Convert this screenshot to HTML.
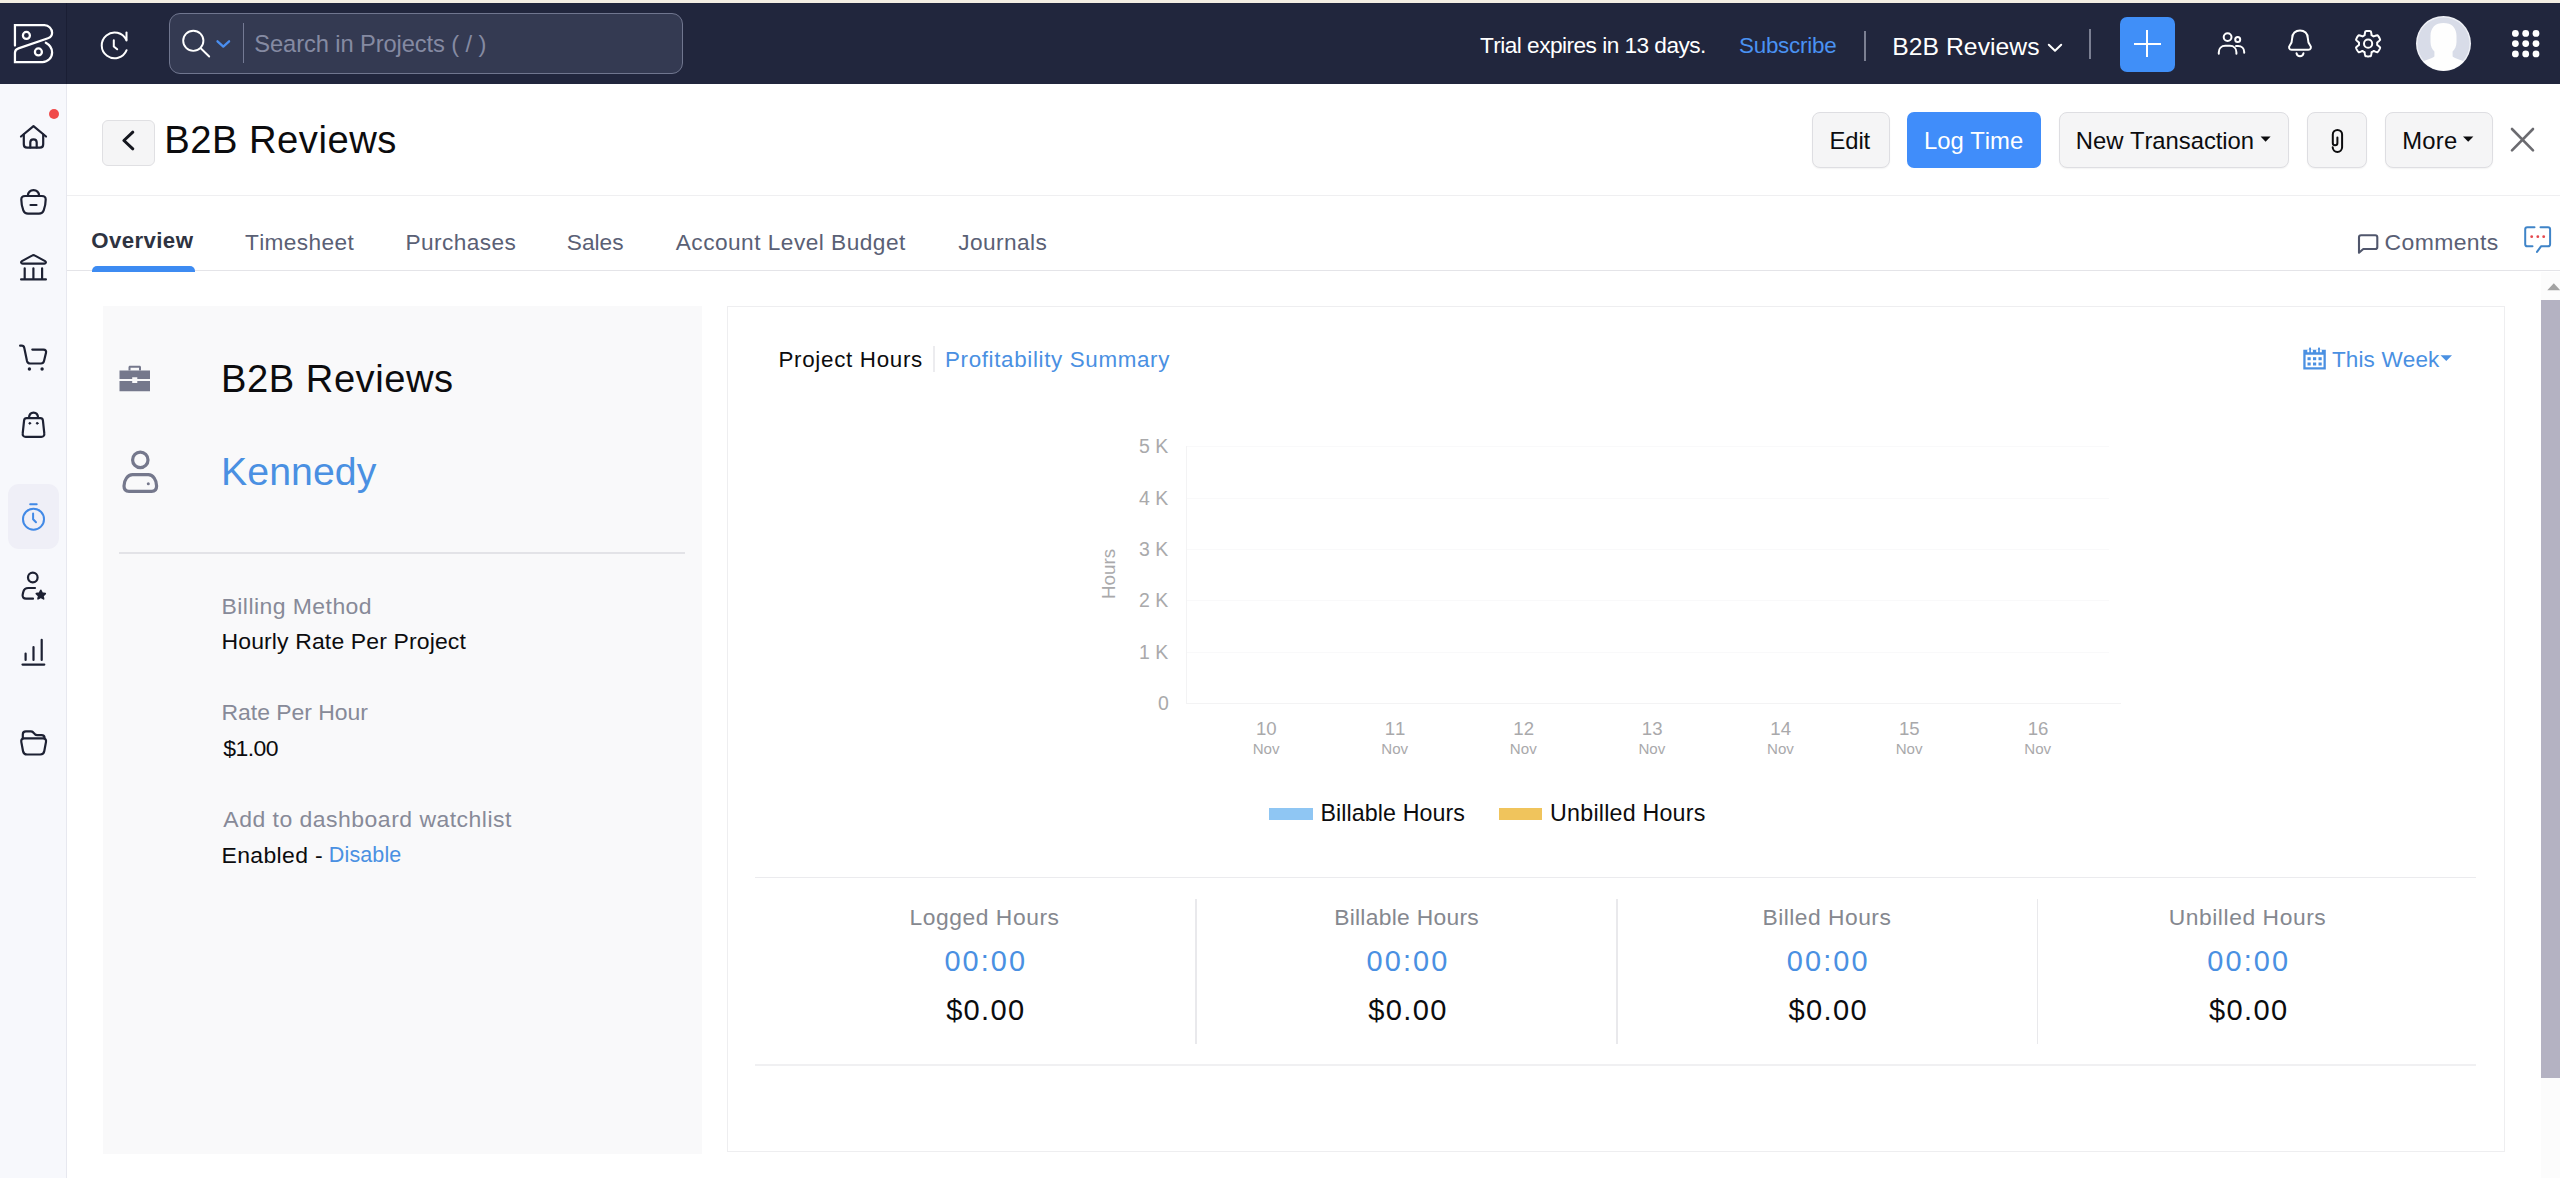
<!DOCTYPE html>
<html lang="en"><head><meta charset="utf-8"><title>B2B Reviews - Projects</title>
<style>
*{box-sizing:border-box;margin:0;padding:0}
html,body{width:2560px;height:1178px;overflow:hidden;background:#fff;font-family:"Liberation Sans",sans-serif;color:#111}
body{position:relative;font-kerning:none;-webkit-font-smoothing:antialiased}
.abs{position:absolute}
.t{position:absolute;white-space:nowrap;line-height:normal;font-kerning:none}
svg{position:absolute;overflow:visible}
#top{position:absolute;left:0;top:0;width:2560px;height:3px;background:#f3eee3}
#hdr{position:absolute;left:0;top:3px;width:2560px;height:81.400px;background:#21263d}
#logo{position:absolute;left:0;top:3px;width:66.700px;height:81.400px;background:#22273f;border-right:1.200px solid #1a1e34}
#side{position:absolute;left:0;top:84px;width:67px;height:1094px;background:#f7f8fc;border-right:1.500px solid #e7e8ef}
</style></head>
<body>
<div id="top"></div><div id="hdr"></div><div id="logo"></div>
<svg style="left:0;top:0" width="70" height="84" viewBox="0 0 70 84" fill="none" stroke="#fff" stroke-width="2.250" stroke-linejoin="miter" stroke-linecap="round">
<path d="M14.950 45.600V25.200H44.500A7.600 7.600 0 0 1 52.100 32.800C52.100 35.900 50.600 37.300 48 38.200L18.500 48.400C16.200 49.200 14.950 50.600 14.950 52.800V62.100H42.500A9.600 9.600 0 0 0 52.100 52.500C52.100 48.200 49.500 44.800 45.800 42.800"/>
<circle cx="26.400" cy="35.400" r="3.500"/><circle cx="38.400" cy="51.950" r="3.500"/></svg>
<svg style="left:90px;top:20px" width="48" height="48" viewBox="90 20 48 48" fill="none" stroke="#fff" stroke-width="2" stroke-linecap="round" stroke-linejoin="round">
<path d="M126.300 39.900A12.900 12.900 0 1 0 126.600 50.200"/><path d="M126.500 32.400V40.400"/><path d="M113.800 40.200V46.400L117.200 49.300"/></svg>
<div class="abs" style="left:169px;top:13px;width:514px;height:61px;border:1px solid #70768f;border-radius:11px;background:#343a52"></div>
<div class="abs" style="left:242.500px;top:23px;width:1.500px;height:40px;background:#747a94"></div>
<svg style="left:178px;top:26px" width="60" height="36" viewBox="178 26 60 36" fill="none" stroke-linecap="round" stroke-linejoin="round">
<circle cx="193.300" cy="40.800" r="10.100" stroke="#fff" stroke-width="1.900"/><path d="M200.700 48.200L209.200 56.500" stroke="#fff" stroke-width="1.900"/>
<path d="M217.500 41.300L223.300 46.600L229.100 41.300" stroke="#4a8ef0" stroke-width="2.300"/></svg>
<span class="t" style="left:254.32px;top:30.85px;font-size:23.69px;color:#858aa2;letter-spacing:-0.097px;">Search in Projects ( / )</span>
<span class="t" style="left:1479.99px;top:32.07px;font-size:22.67px;color:#fff;letter-spacing:-0.536px;">Trial expires in 13 days.</span>
<span class="t" style="left:1738.98px;top:32.94px;font-size:22.38px;color:#4a92f2;letter-spacing:-0.228px;">Subscribe</span>
<div class="abs" style="left:1864.300px;top:31px;width:1.500px;height:30px;background:#7b7f92"></div>
<span class="t" style="left:1892.27px;top:32.63px;font-size:24.71px;color:#fff;letter-spacing:0.038px;">B2B Reviews</span>
<svg style="left:2044px;top:38px" width="22" height="18" viewBox="2044 38 22 18" fill="none" stroke="#fff" stroke-width="2" stroke-linecap="round" stroke-linejoin="round"><path d="M2048.800 44.800L2055 50.800L2061.200 44.800"/></svg>
<div class="abs" style="left:2089.200px;top:29px;width:1.500px;height:30px;background:#7b7f92"></div>
<div class="abs" style="left:2120px;top:16.500px;width:55px;height:55px;border-radius:7px;background:#408ff8"></div>
<div class="abs" style="left:2133.500px;top:42.500px;width:27px;height:2px;background:#fff"></div><div class="abs" style="left:2146px;top:30.300px;width:2px;height:26.500px;background:#fff"></div>
<svg style="left:2214px;top:28px" width="36" height="30" viewBox="2214 28 36 30" fill="none" stroke="#fff" stroke-width="2" stroke-linecap="round" stroke-linejoin="round">
<circle cx="2227.600" cy="37.100" r="3.900"/><path d="M2218.800 53.700V52.300c0-3.900 2.600-6.500 6.500-6.500h4.600c3.900 0 6.500 2.600 6.500 6.500v1.400"/>
<circle cx="2237.700" cy="39.500" r="2.500"/><path d="M2236 45.900h2c3.700 0 6.200 2.500 6.200 6.100v.8"/></svg>
<svg style="left:2284px;top:26px" width="32" height="36" viewBox="2284 26 32 36" fill="none" stroke="#fff" stroke-width="2" stroke-linecap="round" stroke-linejoin="round">
<path d="M2291.600 49.800H2308.300c2.300 0 3.400-2.500 2-4.200-1.800-2.200-2.500-4.400-2.500-7.600 0-4.300-3.300-7.600-7.800-7.600s-7.800 3.300-7.800 7.600c0 3.200-.7 5.400-2.500 7.600-1.400 1.700-.4 4.200 1.900 4.200z"/>
<path d="M2296.500 53.300c.4 1.800 1.800 3 3.500 3s3.100-1.200 3.500-3"/></svg>
<svg style="left:2350px;top:26px" width="36" height="36" viewBox="2350 26 36 36" fill="none" stroke="#fff" stroke-width="2" stroke-linejoin="round">
<path d="M2368.10 31.00 L2368.65 31.01 L2369.21 31.05 L2369.76 31.11 L2370.31 31.19 L2370.83 31.38 L2371.13 32.41 L2371.34 33.44 L2371.48 34.40 L2371.60 35.25 L2371.95 35.45 L2372.30 35.63 L2372.65 35.82 L2372.99 36.03 L2373.32 36.25 L2373.67 36.44 L2374.46 36.12 L2375.37 35.77 L2376.37 35.43 L2377.41 35.17 L2377.83 35.54 L2378.18 35.97 L2378.50 36.42 L2378.81 36.88 L2379.10 37.35 L2379.37 37.84 L2379.61 38.33 L2379.83 38.84 L2380.03 39.36 L2380.14 39.90 L2379.39 40.67 L2378.61 41.37 L2377.84 41.98 L2377.17 42.51 L2377.17 42.91 L2377.19 43.30 L2377.20 43.70 L2377.19 44.10 L2377.17 44.49 L2377.17 44.89 L2377.84 45.42 L2378.61 46.03 L2379.39 46.73 L2380.14 47.50 L2380.03 48.04 L2379.83 48.56 L2379.61 49.07 L2379.37 49.56 L2379.10 50.05 L2378.81 50.52 L2378.50 50.98 L2378.18 51.43 L2377.83 51.86 L2377.41 52.23 L2376.37 51.97 L2375.37 51.63 L2374.46 51.28 L2373.67 50.96 L2373.32 51.15 L2372.99 51.37 L2372.65 51.58 L2372.30 51.77 L2371.95 51.95 L2371.60 52.15 L2371.48 53.00 L2371.34 53.96 L2371.13 54.99 L2370.83 56.02 L2370.31 56.21 L2369.76 56.29 L2369.21 56.35 L2368.65 56.39 L2368.10 56.40 L2367.55 56.39 L2366.99 56.35 L2366.44 56.29 L2365.89 56.21 L2365.37 56.02 L2365.07 54.99 L2364.86 53.96 L2364.72 53.00 L2364.60 52.15 L2364.25 51.95 L2363.90 51.77 L2363.55 51.58 L2363.21 51.37 L2362.88 51.15 L2362.53 50.96 L2361.74 51.28 L2360.83 51.63 L2359.83 51.97 L2358.79 52.23 L2358.37 51.86 L2358.02 51.43 L2357.70 50.98 L2357.39 50.52 L2357.10 50.05 L2356.83 49.56 L2356.59 49.07 L2356.37 48.56 L2356.17 48.04 L2356.06 47.50 L2356.81 46.73 L2357.59 46.03 L2358.36 45.42 L2359.03 44.89 L2359.03 44.49 L2359.01 44.10 L2359.00 43.70 L2359.01 43.30 L2359.03 42.91 L2359.03 42.51 L2358.36 41.98 L2357.59 41.37 L2356.81 40.67 L2356.06 39.90 L2356.17 39.36 L2356.37 38.84 L2356.59 38.33 L2356.83 37.84 L2357.10 37.35 L2357.39 36.88 L2357.70 36.42 L2358.02 35.97 L2358.37 35.54 L2358.79 35.17 L2359.83 35.43 L2360.83 35.77 L2361.74 36.12 L2362.53 36.44 L2362.88 36.25 L2363.21 36.03 L2363.55 35.82 L2363.90 35.63 L2364.25 35.45 L2364.60 35.25 L2364.72 34.40 L2364.86 33.44 L2365.07 32.41 L2365.37 31.38 L2365.89 31.19 L2366.44 31.11 L2366.99 31.05 L2367.55 31.01Z"/><circle cx="2368.100" cy="43.700" r="4.100"/></svg>
<svg style="left:2416px;top:16px" width="55" height="55" viewBox="0 0 55 55"><defs><clipPath id="av"><circle cx="27.500" cy="27.500" r="27"/></clipPath></defs>
<circle cx="27.500" cy="27.500" r="27.500" fill="#eef0f6"/><circle cx="27.500" cy="27.500" r="26" fill="#d8dce8"/>
<g clip-path="url(#av)" fill="#fefefe"><path d="M14.500 20C14.500 11.500 19.500 7 27.500 7S40.500 11.500 40.500 20V26C40.500 30.500 38.700 33.500 36.600 35.500V40.500C40 43 47 44 52 48V56H3V48C8 44 15 43 18.400 40.500V35.500C16.300 33.500 14.500 30.500 14.500 26Z"/></g></svg>
<svg style="left:0;top:0" width="2560" height="84" viewBox="0 0 2560 84" fill="#fff"><circle cx="2515.4" cy="33.4" r="3.400"/><circle cx="2525.7" cy="33.4" r="3.400"/><circle cx="2536" cy="33.4" r="3.400"/><circle cx="2515.4" cy="43.6" r="3.400"/><circle cx="2525.7" cy="43.6" r="3.400"/><circle cx="2536" cy="43.6" r="3.400"/><circle cx="2515.4" cy="53.9" r="3.400"/><circle cx="2525.7" cy="53.9" r="3.400"/><circle cx="2536" cy="53.9" r="3.400"/></svg>
<div id="side"></div>
<div class="abs" style="left:8px;top:484px;width:51px;height:65px;border-radius:11px;background:#efeff7"></div>
<div class="abs" style="left:48.800px;top:108.800px;width:10.400px;height:10.400px;border-radius:50%;background:#f04a4a"></div>
<svg style="left:0;top:84px" width="67" height="1094" viewBox="0 84 67 1094" fill="none" stroke="#1d2133" stroke-width="2.200" stroke-linecap="round" stroke-linejoin="round">
<!-- home -->
<path d="M21 136.500L33.500 126.200L46 136.500"/><path d="M23.800 134.500V144.300c0 2 1.300 3.400 3.300 3.400H39.900c2 0 3.300-1.400 3.300-3.400V134.500"/><path d="M30.300 147.500V142.500c0-1.900 1.300-3.200 3.200-3.200s3.200 1.300 3.200 3.200v5"/>
<!-- basket -->
<path d="M21.300 199.500c0-2.200 1.600-3.500 3.800-3.500H41.900c2.200 0 3.800 1.300 3.800 3.500 0 4-.8 7.500-2 10.800-.8 2.100-2.400 3.300-4.700 3.300H28c-2.300 0-3.900-1.200-4.700-3.300-1.200-3.300-2-6.800-2-10.800z"/><path d="M27.800 195.800c.4-3.300 2.600-5.600 5.700-5.600s5.300 2.300 5.700 5.600"/><path d="M30.500 205H36.500"/>
<!-- bank -->
<path d="M22.700 263.700H44.300c1.600 0 2.100-1.800.8-2.600L35 255.600c-1-.6-2-.6-3 0L21.900 261.100c-1.300.8-.8 2.600.8 2.600z"/><path d="M24.700 268.300V278.500M33.400 268.300V278.500M42.100 268.300V278.500"/><path d="M21.100 279.400H45.900"/>
<!-- cart -->
<path d="M20.100 345.700h1.500c1.500 0 2.400.8 2.700 2.300L27 360.900c.4 1.700 1.400 2.600 3.200 2.600H41c1.600 0 2.600-.8 3-2.400l2-8.300c.5-2-.6-3.200-2.500-3.200H32.300"/><circle cx="29.400" cy="369" r="1.700" fill="#1d2133" stroke="none"/><circle cx="42.100" cy="369" r="1.700" fill="#1d2133" stroke="none"/>
<!-- bag -->
<path d="M26.600 418.200H40.400c1.400 0 2.300.8 2.500 2.200L44.300 433.400c.3 2.100-.9 3.400-3 3.400H25.700c-2.100 0-3.300-1.300-3-3.400L24.100 420.400c.2-1.400 1.100-2.200 2.500-2.200z"/><path d="M28.900 418c.3-3.300 2-5.400 4.650-5.400s4.350 2.100 4.650 5.400"/><circle cx="29.800" cy="423.300" r=".9" fill="#1d2133" stroke-width="1"/><circle cx="37.200" cy="423.300" r=".9" fill="#1d2133" stroke-width="1"/>
<!-- person star -->
<circle cx="32.800" cy="577.500" r="4.800"/><path d="M35 588H28.300c-2.800 0-4.500 1.500-5.100 4.200l-.5 2.300c-.6 2.600.8 4.200 3.400 4.200H33"/><path d="M40.800 590.300l1.400 2.800 3.100.5-2.300 2.200.6 3.100-2.800-1.500-2.800 1.500.6-3.100-2.300-2.200 3.100-.5z" fill="#1d2133" stroke-width="1.600"/>
<!-- bars -->
<path d="M25.600 653.500V660M33.500 647V660M41.700 639.800V660"/><path d="M22.500 664.600H44.300"/>
<!-- folder -->
<path d="M22.800 738V734.500c0-1.900 1.200-3.100 3.100-3.100H30.800c1 0 1.700.3 2.400 1l1.600 1.700c.7.700 1.400 1 2.400 1H41.500c1.900 0 3.100 1.200 3.100 3.100V738"/><path d="M24.300 738.300H43c2.100 0 3.400 1.500 3 3.600L44.300 751c-.4 2.200-1.800 3.500-4 3.500H27c-2.200 0-3.600-1.300-4-3.500L21.300 741.900c-.4-2.100.9-3.600 3-3.600z"/>
</svg>
<svg style="left:14px;top:498px" width="40" height="40" viewBox="14 498 40 40" fill="none" stroke="#4189e6" stroke-width="2" stroke-linecap="round" stroke-linejoin="round">
<circle cx="33.500" cy="519.200" r="10.500"/><path d="M30.200 504.300H36.700"/><path d="M33.100 513.500V519.300L36 522.300"/></svg>
<div class="abs" style="left:67px;top:194.500px;width:2493px;height:1.500px;background:#efeff1"></div>
<div class="abs" style="left:102px;top:120px;width:53px;height:45.500px;border:1px solid #e0e0e3;border-radius:6px;background:#f5f5f6"></div>
<svg style="left:115px;top:125px" width="26" height="32" viewBox="115 125 26 32" fill="none" stroke="#15171f" stroke-width="3" stroke-linecap="round" stroke-linejoin="round"><path d="M132.800 132.200L123.900 140.500L132.800 148.800"/></svg>
<span class="t" style="left:164.26px;top:118.19px;font-size:38.23px;color:#0c0c0e;letter-spacing:0.479px;">B2B Reviews</span>
<div class="abs" style="left:1812px;top:112px;width:77.5px;height:55.500px;border:1px solid #dedee2;border-radius:8px;background:#f5f5f6;box-shadow:0 1px 1.500px rgba(0,0,0,.05)"></div>
<div class="abs" style="left:1906.7px;top:112px;width:134.5px;height:55.500px;border-radius:7px;background:#408dfa"></div>
<div class="abs" style="left:2058.5px;top:112px;width:230.5px;height:55.500px;border:1px solid #dedee2;border-radius:8px;background:#f5f5f6;box-shadow:0 1px 1.500px rgba(0,0,0,.05)"></div>
<div class="abs" style="left:2306.7px;top:112px;width:60.0px;height:55.500px;border:1px solid #dedee2;border-radius:8px;background:#f5f5f6;box-shadow:0 1px 1.500px rgba(0,0,0,.05)"></div>
<div class="abs" style="left:2384.6px;top:112px;width:108.0px;height:55.500px;border:1px solid #dedee2;border-radius:8px;background:#f5f5f6;box-shadow:0 1px 1.500px rgba(0,0,0,.05)"></div>
<span class="t" style="left:1829.54px;top:126.82px;font-size:23.84px;color:#0c0c0e;letter-spacing:-0.149px;">Edit</span>
<span class="t" style="left:1924.04px;top:126.82px;font-size:23.84px;color:#fff;letter-spacing:-0.022px;">Log Time</span>
<span class="t" style="left:2075.84px;top:126.82px;font-size:23.84px;color:#0c0c0e;letter-spacing:-0.039px;">New Transaction</span>
<span class="t" style="left:2402.24px;top:126.82px;font-size:23.84px;color:#0c0c0e;letter-spacing:0.235px;">More</span>
<svg style="left:2258px;top:134px" width="16" height="10" viewBox="2258 134 16 10"><path d="M2260.600 136.600H2270.600L2265.600 141.800z" fill="#0c0c0e"/></svg>
<svg style="left:2460px;top:134px" width="16" height="10" viewBox="2460 134 16 10"><path d="M2463 136.600H2473.400L2468.200 141.800z" fill="#0c0c0e"/></svg>
<svg style="left:2326px;top:126px" width="22" height="30" viewBox="2326 126 22 30" fill="none" stroke="#0c0c0e" stroke-width="2" stroke-linecap="round" stroke-linejoin="round">
<path d="M2337.400 137.500V143a2.300 2.300 0 0 1-4.600 0V134.600a4.650 4.650 0 0 1 9.300 0V147.300a4.700 4.700 0 0 1-9.400 0"/></svg>
<svg style="left:2506px;top:124px" width="32" height="32" viewBox="2506 124 32 32" fill="none" stroke="#6b6b70" stroke-width="2.600" stroke-linecap="round"><path d="M2512 129L2533 150.300M2533 129L2512 150.300"/></svg>
<div class="abs" style="left:67px;top:269.600px;width:2493px;height:1.700px;background:#e4e4e8"></div>
<div class="abs" style="left:91.500px;top:266px;width:103px;height:5.500px;border-radius:5px 5px 0 0;background:#3d8bf2"></div>
<span class="t" style="left:91.29px;top:227.77px;font-size:22.24px;color:#2e3341;letter-spacing:0.395px;font-weight:700;">Overview</span>
<span class="t" style="left:244.99px;top:229.27px;font-size:22.67px;color:#5a6075;letter-spacing:0.377px;">Timesheet</span>
<span class="t" style="left:405.44px;top:229.27px;font-size:22.67px;color:#5a6075;letter-spacing:0.406px;">Purchases</span>
<span class="t" style="left:566.87px;top:229.27px;font-size:22.67px;color:#5a6075;letter-spacing:-0.018px;">Sales</span>
<span class="t" style="left:675.76px;top:229.27px;font-size:22.67px;color:#5a6075;letter-spacing:0.479px;">Account Level Budget</span>
<span class="t" style="left:958.35px;top:229.27px;font-size:22.67px;color:#5a6075;letter-spacing:0.395px;">Journals</span>
<span class="t" style="left:2384.53px;top:229.11px;font-size:22.97px;color:#5a6075;letter-spacing:0.381px;">Comments</span>
<svg style="left:2354px;top:230px" width="28" height="28" viewBox="2354 230 28 28" fill="none" stroke="#50566c" stroke-width="2.100" stroke-linejoin="round" stroke-linecap="round">
<path d="M2359 252.700V237.300c0-1.300.8-2.100 2.100-2.100H2375.200c1.300 0 2.100.8 2.100 2.100V246.900c0 1.300-.8 2.100-2.100 2.100H2363.300z"/></svg>
<svg style="left:2520px;top:222px" width="36" height="36" viewBox="2520 222 36 36" fill="none" stroke="#3f84c8" stroke-width="2" stroke-linecap="round" stroke-linejoin="round">
<path d="M2534.500 227.300H2527.300c-1.300 0-2.100.8-2.100 2.100V244.200c0 1.300.8 2.100 2.100 2.100H2532.500"/><path d="M2540.500 227.300H2548c1.300 0 2.100.8 2.100 2.100V244.200c0 1.300-.8 2.100-2.100 2.100H2541l-4 5.600"/>
<g fill="#e5484d" stroke="none"><circle cx="2531.700" cy="236.700" r="1.400"/><circle cx="2537.800" cy="236.700" r="1.400"/><circle cx="2543.700" cy="236.700" r="1.400"/></g></svg>
<div class="abs" style="left:2541px;top:272px;width:19px;height:906px;background:#fcfcfc"></div>
<div class="abs" style="left:2541px;top:300px;width:19px;height:777.500px;background:#b4b2c2"></div>
<svg style="left:2541px;top:280px" width="19" height="14" viewBox="2541 280 19 14"><path d="M2547.300 290.200L2553.800 283.300L2560.300 290.200z" fill="#a3a3a3"/></svg>
<div class="abs" style="left:102.500px;top:305.500px;width:599.500px;height:848px;background:#f9f9fa"></div>
<svg style="left:116px;top:362px" width="38" height="32" viewBox="116 362 38 32" fill="#75788c">
<path d="M128.500 370.500V367.300c0-.9.600-1.500 1.500-1.500h9.500c.9 0 1.500.6 1.500 1.500v3.200h-2v-2.700h-8.500v2.700z"/>
<path d="M119.500 370.500H150v8.600h-12.700v-1.800h-5.100v1.800H119.500z"/><path d="M119.500 381H132.200v2.100h5.100V381H150v10.300H119.500z"/></svg>
<span class="t" style="left:221.12px;top:356.71px;font-size:38.15px;color:#0c0c0e;letter-spacing:0.511px;">B2B Reviews</span>
<svg style="left:118px;top:446px" width="46" height="52" viewBox="118 446 46 52" fill="none" stroke="#75788c" stroke-width="3.200" stroke-linecap="round" stroke-linejoin="round">
<circle cx="140.300" cy="459.900" r="7.700"/><path d="M132.500 474.700H148.300c4.800 0 8.300 5.300 8.300 11.300 0 3.300-1.800 5.300-5 5.300H129c-3.200 0-5-2-5-5.300 0-6 3.700-11.300 8.500-11.300z"/><circle cx="148.300" cy="483.700" r="1.500" fill="#75788c" stroke="none"/></svg>
<span class="t" style="left:221.03px;top:448.97px;font-size:39.24px;color:#4a90e2;letter-spacing:0.061px;">Kennedy</span>
<div class="abs" style="left:119px;top:552.300px;width:566px;height:1.500px;background:#e3e3e7"></div>
<span class="t" style="left:221.52px;top:592.81px;font-size:22.97px;color:#878a98;letter-spacing:0.447px;">Billing Method</span>
<span class="t" style="left:221.52px;top:627.96px;font-size:22.97px;color:#0c0c0e;letter-spacing:0.137px;">Hourly Rate Per Project</span>
<span class="t" style="left:221.52px;top:699.21px;font-size:22.97px;color:#878a98;letter-spacing:-0.027px;">Rate Per Hour</span>
<span class="t" style="left:223.15px;top:734.91px;font-size:22.97px;color:#0c0c0e;letter-spacing:-0.507px;">$1.00</span>
<span class="t" style="left:223.36px;top:806.21px;font-size:22.97px;color:#878a98;letter-spacing:0.490px;">Add to dashboard watchlist</span>
<span class="t" style="left:221.52px;top:841.91px;font-size:22.97px;color:#0c0c0e;letter-spacing:0.362px;">Enabled -</span>
<span class="t" style="left:328.84px;top:843.23px;font-size:21.51px;color:#4a90e2;letter-spacing:0.130px;">Disable</span>
<div class="abs" style="left:727px;top:305.500px;width:1777.800px;height:846.300px;border:1.500px solid #eeeef0;background:#fff"></div>
<span class="t" style="left:778.46px;top:346.64px;font-size:22.38px;color:#0c0c0e;letter-spacing:0.688px;">Project Hours</span>
<div class="abs" style="left:933px;top:346px;width:1.500px;height:26px;background:#ececef"></div>
<span class="t" style="left:944.96px;top:346.64px;font-size:22.38px;color:#4a90e2;letter-spacing:0.651px;">Profitability Summary</span>
<span class="t" style="left:2331.99px;top:346.50px;font-size:22.53px;color:#4a90e2;letter-spacing:0.120px;">This Week</span>
<svg style="left:2438px;top:352px" width="16" height="12" viewBox="2438 352 16 12"><path d="M2440.500 355.200H2452L2446.250 360.900z" fill="#4a90e2"/></svg>
<svg style="left:2300px;top:344px" width="30" height="30" viewBox="2300 344 30 30" fill="#4a90e2"><path fill-rule="evenodd" d="M2303.300 349.700H2325.800V369.500H2303.300z M2305.600 354.800H2323.500V367.300H2305.600z"/><path d="M2309.300 347.700h1.600v5.300h-1.600z M2318.200 347.700h1.600v5.300h-1.600z"/><path d="M2307.300 349.700h5.600v2.500h-5.600z M2316.200 349.700h5.600v2.500h-5.600z" fill="#fff"/><path d="M2309.300 347.700h1.600v5.300h-1.600z M2318.200 347.700h1.600v5.300h-1.600z"/><rect x="2307.5" y="357.2" width="3.200" height="3" /><rect x="2313" y="357.2" width="3.200" height="3" /><rect x="2318.5" y="357.2" width="3.200" height="3" /><rect x="2307.5" y="362.5" width="3.200" height="3" /><rect x="2313" y="362.5" width="3.200" height="3" /><rect x="2318.5" y="362.5" width="3.200" height="3" /></svg>
<div class="abs" style="left:1185.500px;top:446px;width:1.500px;height:258px;background:#f3f3f4"></div>
<div class="abs" style="left:1185.500px;top:702.500px;width:935px;height:1.500px;background:#f3f3f4"></div>
<div class="abs" style="left:1187px;top:446.2px;width:922px;height:1.200px;background:#f9f9fa"></div>
<div class="abs" style="left:1187px;top:497.6px;width:922px;height:1.200px;background:#f9f9fa"></div>
<div class="abs" style="left:1187px;top:549px;width:922px;height:1.200px;background:#f9f9fa"></div>
<div class="abs" style="left:1187px;top:600.3px;width:922px;height:1.200px;background:#f9f9fa"></div>
<div class="abs" style="left:1187px;top:651.7px;width:922px;height:1.200px;background:#f9f9fa"></div>
<span class="t" style="left:1138.98px;top:435.37px;font-size:19.48px;color:#a9a9ab;">5 K</span>
<span class="t" style="left:1138.98px;top:486.69px;font-size:19.48px;color:#a9a9ab;">4 K</span>
<span class="t" style="left:1138.98px;top:538.01px;font-size:19.48px;color:#a9a9ab;">3 K</span>
<span class="t" style="left:1138.98px;top:589.33px;font-size:19.48px;color:#a9a9ab;">2 K</span>
<span class="t" style="left:1138.98px;top:640.65px;font-size:19.48px;color:#a9a9ab;">1 K</span>
<span class="t" style="left:1157.93px;top:691.97px;font-size:19.48px;color:#a9a9ab;">0</span>
<span class="t" style="left:1256.01px;top:717.76px;font-size:18.60px;color:#a9a9ab;">10</span>
<span class="t" style="left:1252.66px;top:739.62px;font-size:15.12px;color:#a9a9ab;">Nov</span>
<span class="t" style="left:1384.70px;top:717.76px;font-size:18.60px;color:#a9a9ab;">11</span>
<span class="t" style="left:1381.26px;top:739.62px;font-size:15.12px;color:#a9a9ab;">Nov</span>
<span class="t" style="left:1513.31px;top:717.76px;font-size:18.60px;color:#a9a9ab;">12</span>
<span class="t" style="left:1509.86px;top:739.62px;font-size:15.12px;color:#a9a9ab;">Nov</span>
<span class="t" style="left:1641.85px;top:717.76px;font-size:18.60px;color:#a9a9ab;">13</span>
<span class="t" style="left:1638.46px;top:739.62px;font-size:15.12px;color:#a9a9ab;">Nov</span>
<span class="t" style="left:1770.32px;top:717.76px;font-size:18.60px;color:#a9a9ab;">14</span>
<span class="t" style="left:1767.06px;top:739.62px;font-size:15.12px;color:#a9a9ab;">Nov</span>
<span class="t" style="left:1899.03px;top:717.76px;font-size:18.60px;color:#a9a9ab;">15</span>
<span class="t" style="left:1895.66px;top:739.62px;font-size:15.12px;color:#a9a9ab;">Nov</span>
<span class="t" style="left:2027.65px;top:717.76px;font-size:18.60px;color:#a9a9ab;">16</span>
<span class="t" style="left:2024.26px;top:739.62px;font-size:15.12px;color:#a9a9ab;">Nov</span>
<span class="t" style="left:1108.500px;top:574.300px;font-size:18.800px;color:#a9a9ab;transform:translate(-50%,-50%) rotate(-90deg);transform-origin:50% 50%">Hours</span>
<div class="abs" style="left:1269px;top:808.300px;width:43.700px;height:11.700px;background:#8fc6f3"></div>
<div class="abs" style="left:1499.200px;top:808.300px;width:43px;height:11.700px;background:#f0c45c"></div>
<span class="t" style="left:1320.49px;top:799.95px;font-size:23.26px;color:#0c0c0e;letter-spacing:0.082px;">Billable Hours</span>
<span class="t" style="left:1550.11px;top:799.95px;font-size:23.26px;color:#0c0c0e;letter-spacing:0.208px;">Unbilled Hours</span>
<div class="abs" style="left:754.500px;top:876.700px;width:1721.500px;height:1.500px;background:#ebebee"></div>
<div class="abs" style="left:754.500px;top:1064.300px;width:1721.500px;height:1.500px;background:#f0f0f2"></div>
<div class="abs" style="left:1195.3px;top:899px;width:1.500px;height:144.500px;background:#e9e9ec"></div>
<div class="abs" style="left:1616.3px;top:899px;width:1.500px;height:144.500px;background:#e9e9ec"></div>
<div class="abs" style="left:2036.8px;top:899px;width:1.500px;height:144.500px;background:#e9e9ec"></div>
<span class="t" style="left:909.43px;top:903.74px;font-size:22.82px;color:#85888f;letter-spacing:0.567px;">Logged Hours</span>
<span class="t" style="left:944.42px;top:945.42px;font-size:28.92px;color:#4a90e2;letter-spacing:2.069px;">00:00</span>
<span class="t" style="left:946.14px;top:994.48px;font-size:29.07px;color:#0c0c0e;letter-spacing:1.325px;">$0.00</span>
<span class="t" style="left:1334.13px;top:903.74px;font-size:22.82px;color:#85888f;letter-spacing:0.293px;">Billable Hours</span>
<span class="t" style="left:1366.62px;top:945.42px;font-size:28.92px;color:#4a90e2;letter-spacing:2.069px;">00:00</span>
<span class="t" style="left:1368.34px;top:994.48px;font-size:29.07px;color:#0c0c0e;letter-spacing:1.325px;">$0.00</span>
<span class="t" style="left:1762.43px;top:903.74px;font-size:22.82px;color:#85888f;letter-spacing:0.497px;">Billed Hours</span>
<span class="t" style="left:1786.87px;top:945.42px;font-size:28.92px;color:#4a90e2;letter-spacing:2.069px;">00:00</span>
<span class="t" style="left:1788.59px;top:994.48px;font-size:29.07px;color:#0c0c0e;letter-spacing:1.325px;">$0.00</span>
<span class="t" style="left:2168.64px;top:903.74px;font-size:22.82px;color:#85888f;letter-spacing:0.578px;">Unbilled Hours</span>
<span class="t" style="left:2207.37px;top:945.42px;font-size:28.92px;color:#4a90e2;letter-spacing:2.069px;">00:00</span>
<span class="t" style="left:2209.09px;top:994.48px;font-size:29.07px;color:#0c0c0e;letter-spacing:1.325px;">$0.00</span>
</body></html>
